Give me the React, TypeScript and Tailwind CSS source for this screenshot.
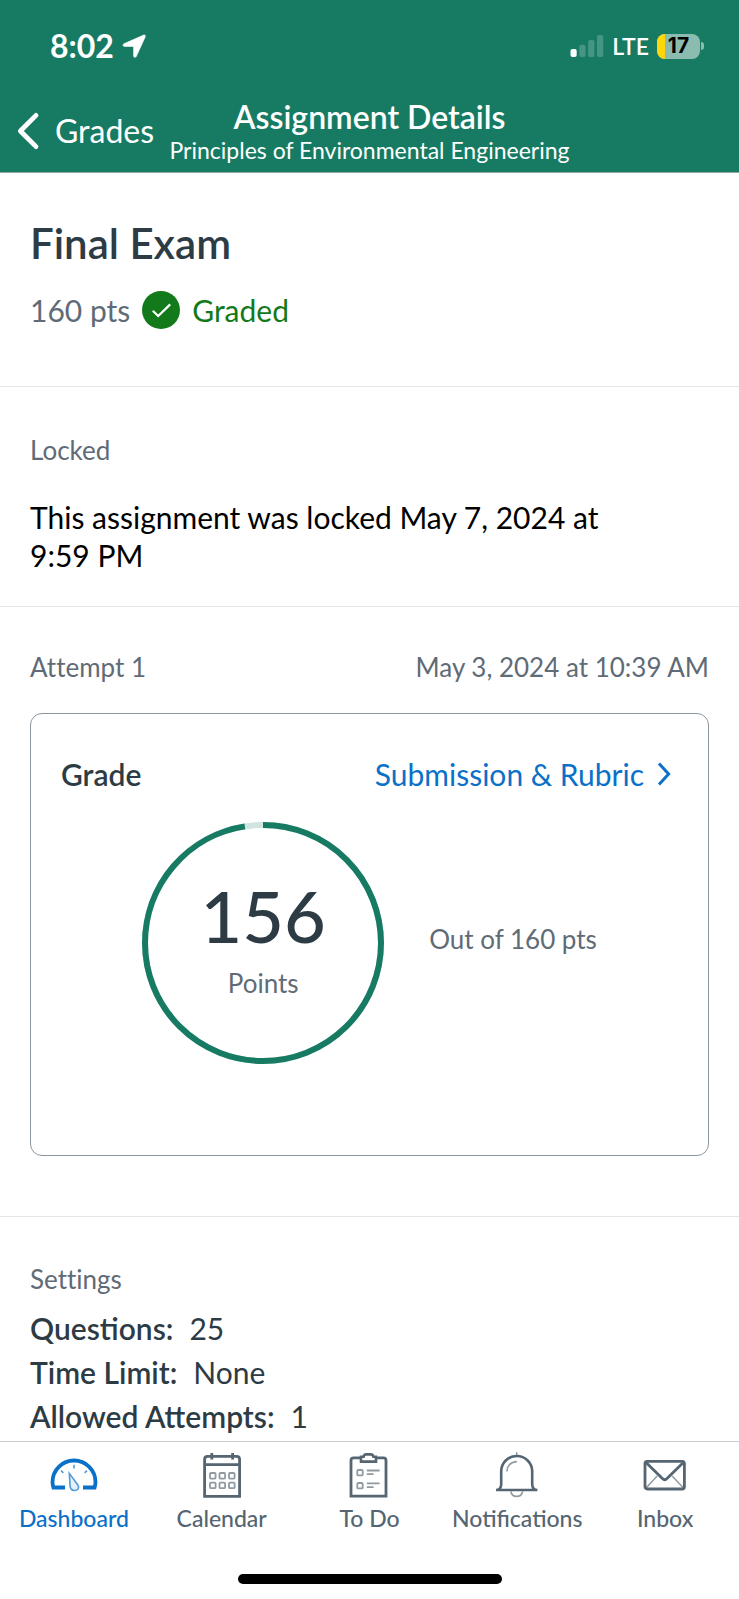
import type { ReactNode } from "react";

type Tab = { label: string; icon: ReactNode; active?: boolean };

function LocationArrow() {
  return (
    <svg viewBox="0 0 24 24" className="h-6 w-6" fill="currentColor" aria-hidden="true">
      <path d="M21.6 1.1 1.9 9.8c-1.5.7-1.1 2.6.5 2.6h8.6c.4 0 .6.2.6.6v8.8c0 1.8 2 2.1 2.7.6l8.9-19.5c.6-1.4-.3-2.4-1.6-1.8Z" stroke="currentColor" strokeWidth="0.6" />
    </svg>
  );
}

function SignalBars() {
  return (
    <svg viewBox="0 0 34 22" className="h-[22px] w-[34px]" fill="currentColor" aria-hidden="true">
      <rect x="0.5" y="14" width="6.2" height="8" rx="2" />
      <g opacity="0.2">
        <rect x="9.3" y="9.7" width="6.2" height="12.3" rx="2" />
        <rect x="18.2" y="5" width="6.2" height="17" rx="2" />
        <rect x="27" y="0" width="6.2" height="22" rx="2" />
      </g>
    </svg>
  );
}

function Battery({ level }: { level: number }) {
  return (
    <div className="flex items-center gap-px">
      <div className="relative flex h-[25px] w-[43px] items-center justify-center overflow-hidden rounded-lg bg-[#8cbcb0]">
        <div className="absolute inset-y-0 left-0 bg-[#ffd60a]" style={{ width: `${level + 1}%` }} />
        <span className="relative font-[Inter,sans-serif] text-[21px] leading-6 font-bold text-black">
          {level}
        </span>
      </div>
      <div className="h-2 w-[3px] rounded-r-full bg-[#8cbcb0]" />
    </div>
  );
}

function StatusBar() {
  return (
    <div className="flex items-center justify-between pr-[35px] pl-[50px]">
      <div className="flex items-center gap-2">
        <span className="text-[32px] leading-9 font-bold">8:02</span>
        <LocationArrow />
      </div>
      <div className="flex items-center gap-2">
        <SignalBars />
        <span className="text-[23px] leading-8 font-semibold">LTE</span>
        <Battery level={17} />
      </div>
    </div>
  );
}

function NavBar() {
  return (
    <div className="grid grid-cols-[1fr_auto_1fr] items-center">
      <a href="#grades" className="flex items-center gap-[15px] pb-[3px] pl-4">
        <svg viewBox="0 0 24 38" className="h-[38px] w-6" fill="none" stroke="currentColor" strokeWidth="4.8" strokeLinecap="round" strokeLinejoin="round" aria-hidden="true">
          <path d="M20 3.4 4.4 19 20 34.6" />
        </svg>
        <span className="text-[32px] leading-10">Grades</span>
      </a>
      <div className="text-center">
        <h1 className="text-[32px] leading-9 font-semibold">Assignment Details</h1>
        <p className="text-[23px] leading-[30px]">Principles of Environmental Engineering</p>
      </div>
    </div>
  );
}

function ScoreRing({ score, total }: { score: number; total: number }) {
  const r = 118;
  const length = 2 * Math.PI * r;
  return (
    <div className="relative flex h-[242px] w-[242px] flex-col items-center justify-center gap-4 pb-2">
      <svg viewBox="0 0 242 242" className="absolute inset-0 -rotate-90" fill="none" strokeWidth="6" aria-hidden="true">
        <circle cx="121" cy="121" r={r} stroke="#d1e5e0" />
        <circle cx="121" cy="121" r={r} stroke="#177b63" strokeDasharray={`${(length * score) / total} ${length}`} />
      </svg>
      <span className="text-[72px] leading-[72px] font-medium text-[#2d3b45]">{score}</span>
      <span className="text-[26px] leading-8">Points</span>
    </div>
  );
}

function GradeCard() {
  return (
    <div className="mt-[30px] rounded-xl border border-[#8b959e] px-[30px] pt-[42px] pb-[91px]">
      <div className="flex items-center justify-between text-[30px] leading-9">
        <h2 className="font-semibold text-[#2d3b45]">Grade</h2>
        <a href="#submission" className="flex items-center gap-[10px] text-[#0a70c8]">
          Submission &amp; Rubric
          <svg viewBox="0 0 24 26" className="h-[26px] w-6" fill="none" stroke="currentColor" strokeWidth="3" aria-hidden="true">
            <path d="m5 2.6 9.6 10.4L5 23.4" />
          </svg>
        </a>
      </div>
      <div className="mt-[30px] flex items-center justify-center gap-[45px]">
        <ScoreRing score={156} total={160} />
        <span className="pb-2 text-[26px] leading-8">Out of 160 pts</span>
      </div>
    </div>
  );
}

const settings = [
  { name: "Questions", value: "25" },
  { name: "Time Limit", value: "None" },
  { name: "Allowed Attempts", value: "1" },
];

const tabs: Tab[] = [
  {
    label: "Dashboard",
    active: true,
    icon: (
      <>
        <path strokeWidth="3.8" d="M15 36.5H3.4c-.6-2-.9-3.7-.9-5.5a21.5 21.5 0 0 1 43 0c0 1.8-.3 3.5-.9 5.5H33" />
        <g strokeWidth="1.6" opacity="0.7">
          <path d="M24 13.8v3.6M11 19.6l2.4 2.2M37 19.6l-2.4 2.2" />
          <path fill="#dcebf8" d="m19.3 22.4 8.4 11.4c2.1 3.1.2 5.7-3.2 5.7-2.7 0-4.2-1.7-4.4-4.6Z" />
        </g>
      </>
    ),
  },
  {
    label: "Calendar",
    icon: (
      <>
        <path strokeWidth="2.8" d="M6.6 45.4V8.4q0-3 3-3h29q3 0 3 3v37ZM6.6 13.6h35M13.8 2v6.6M34.6 2v6.6" />
        <g strokeWidth="1.8" opacity="0.65">
          <rect x="12" y="22" width="5.6" height="5.6" rx="1" />
          <rect x="21.5" y="22" width="5.6" height="5.6" rx="1" />
          <rect x="31" y="22" width="5.6" height="5.6" rx="1" />
          <rect x="12" y="31.6" width="5.6" height="5.6" rx="1" />
          <rect x="21.5" y="31.6" width="5.6" height="5.6" rx="1" />
          <rect x="31" y="31.6" width="5.6" height="5.6" rx="1" />
        </g>
      </>
    ),
  },
  {
    label: "To Do",
    icon: (
      <>
        <path strokeWidth="2.8" d="M15 6.8H8.6Q6 6.8 6 9.4v35.8h35V9.4q0-2.6-2.6-2.6H32" />
        <path strokeWidth="2.6" d="M16 10.6V5.8h2.6q.6-2.4 2.6-2.4h4.6q2 0 2.6 2.4H31v4.8Z" />
        <g strokeWidth="1.8" opacity="0.65">
          <rect x="12.3" y="19" width="5.4" height="5.4" rx="1" />
          <rect x="12.3" y="32" width="5.4" height="5.4" rx="1" />
          <path d="M21.8 19.5h12.8M21.8 23.2h6.8M21.8 32.4h12.8M21.8 36.1h6.8" />
        </g>
      </>
    ),
  },
  {
    label: "Notifications",
    icon: (
      <>
        <path strokeWidth="2.6" d="M3 39c3.5 0 5.2-2 5.2-6V20.5a15.5 15.5 0 0 1 31 0V33c0 4 1.7 6 5.2 6Z" />
        <g strokeWidth="1.6" opacity="0.65">
          <path d="M23.7 1.2V4M13.8 20.5c0-5.5 4-9.7 10-9.9M17.8 40.5a6 6 0 0 0 11.8 0" />
        </g>
      </>
    ),
  },
  {
    label: "Inbox",
    icon: (
      <>
        <rect strokeWidth="2.8" x="4" y="10.4" width="39.4" height="27.6" rx="2.2" />
        <path strokeWidth="2.8" d="m4.8 11.2 16.6 16.4q2.3 2.2 4.6 0l16.6-16.4" />
        <path strokeWidth="1.5" opacity="0.65" d="M16.2 25 5 37M31.2 25l11.2 12" />
      </>
    ),
  },
];

function TabBar() {
  return (
    <nav className="sticky bottom-0 mt-auto border-t border-[#c7cdd1] bg-white pt-[9px] pb-[15px]">
      <div className="grid grid-cols-5">
        {tabs.map((tab) => (
          <a
            key={tab.label}
            href={`#${tab.label}`}
            aria-current={tab.active ? "page" : undefined}
            className={`flex flex-col items-center gap-[3px] ${tab.active ? "text-[#0a70c8]" : "text-[#556572]"}`}
          >
            <svg viewBox="0 0 48 48" className="h-12 w-12" fill="none" stroke="currentColor" aria-hidden="true">
              {tab.icon}
            </svg>
            <span className="text-[23px] leading-8 font-medium">{tab.label}</span>
          </a>
        ))}
      </div>
      <div className="mx-auto mt-10 h-[10px] w-[264px] rounded-full bg-black" />
    </nav>
  );
}

export default function App() {
  return (
    <div className="flex min-h-screen flex-col bg-white font-[Lato,sans-serif] text-[#5f6b76]">
      <header className="border-b border-[#8fa9a3] bg-[#177b63] pt-7 pb-[7px] text-white">
        <StatusBar />
        <div className="mt-[35px]">
          <NavBar />
        </div>
      </header>
      <main>
        <section className="border-b border-[#e3e5e7] px-[30px] pt-[45px] pb-[57px]">
          <h2 className="text-[42px] leading-[50px] font-semibold text-[#2d3b45]">Final Exam</h2>
          <div className="mt-[23px] flex items-center gap-3 text-[30px] leading-9">
            <span>160 pts</span>
            <span className="flex items-center gap-3 text-[#127a1b]">
              <svg viewBox="0 0 38 38" className="h-[38px] w-[38px]" fill="none" aria-hidden="true">
                <circle cx="19" cy="19" r="19" fill="currentColor" />
                <path d="m10.8 19.8 5.4 5.2 12-11.6" stroke="white" strokeWidth="2.2" />
              </svg>
              Graded
            </span>
          </div>
        </section>
        <section className="border-b border-[#e3e5e7] px-[30px] pt-[47px] pb-8">
          <h3 className="text-[26px] leading-8">Locked</h3>
          <p className="mt-8 max-w-[620px] text-[30px] leading-[38px] text-black">
            This assignment was locked May 7, 2024 at 9:59 PM
          </p>
        </section>
        <section className="border-b border-[#e3e5e7] px-[30px] pt-[44px] pb-[60px]">
          <div className="flex justify-between text-[26px] leading-8 [font-variant-ligatures:none]">
            <span>Attempt 1</span>
            <span>May 3, 2024 at 10:39 AM</span>
          </div>
          <GradeCard />
        </section>
        <section className="px-[30px] pt-[46px]">
          <h3 className="text-[26px] leading-8 [font-variant-ligatures:none]">Settings</h3>
          <dl className="mt-[11px] text-[30px] leading-[44px] text-[#2d3b45]">
            {settings.map((s) => (
              <div key={s.name} className="flex gap-4">
                <dt className="font-semibold">{s.name}:</dt>
                <dd>{s.value}</dd>
              </div>
            ))}
          </dl>
        </section>
      </main>
      <TabBar />
    </div>
  );
}
